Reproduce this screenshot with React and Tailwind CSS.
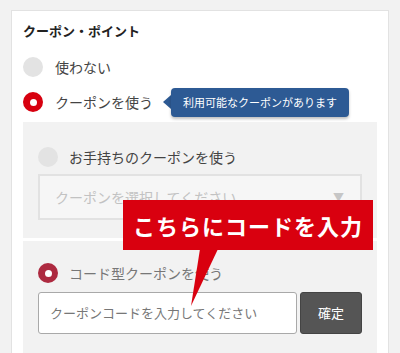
const jp = { fontFamily: '"Noto Sans CJK JP", "Noto Sans", sans-serif' };

// radio circle: off / on / on-muted
function Radio({ state }) {
  if (state === 'on') {
    return (
      <span className="w-[20px] h-[20px] rounded-full bg-[#d7000f] flex items-center justify-center shrink-0">
        <span className="w-[7px] h-[7px] rounded-full bg-white"></span>
      </span>
    );
  }
  if (state === 'muted') {
    return (
      <span className="w-[20px] h-[20px] rounded-full bg-[#ad2a40] flex items-center justify-center shrink-0">
        <span className="w-[7px] h-[7px] rounded-full bg-white"></span>
      </span>
    );
  }
  return <span className="w-[20px] h-[20px] rounded-full bg-[#e3e3e3] shrink-0"></span>;
}

export default function App() {
  return (
    <div className="w-[400px] h-[353px] bg-[#f2f2f2] pt-[10px] px-[11px] overflow-hidden relative" style={jp}>
      {/* Card */}
      <div className="bg-white border border-[#e2e2e2] border-b-0 h-full px-[11px] pt-[11px]">
        <h2 className="text-[13px] leading-[18px] font-bold text-[#222]">クーポン・ポイント</h2>

        <div className="flex items-center h-[20px] mt-[17px]">
          <Radio state="off" />
          <span className="ml-[12px] text-[14px] text-[#444]">使わない</span>
        </div>

        <div className="flex items-center h-[20px] mt-[15px]">
          <Radio state="on" />
          <span className="ml-[12px] text-[14px] text-[#444]">クーポンを使う</span>
          {/* Tooltip */}
          <div className="ml-[10px] flex items-center">
            <span className="w-0 h-0 border-y-[7px] border-y-transparent border-r-[8px] border-r-[#2d5a94]"></span>
            <span className="bg-[#2d5a94] text-white text-[11px] leading-[29px] h-[29px] px-[12px] rounded-[4px] shadow-[0_2px_3px_rgba(0,0,0,0.25)]">
              利用可能なクーポンがあります
            </span>
          </div>
        </div>

        {/* Coupon panel */}
        <div className="mt-[10px] bg-[#f2f2f2]">
          <div className="px-[15px] pt-[25px] pb-[18px]">
            <div className="flex items-center h-[20px]">
              <Radio state="off" />
              <span className="ml-[11px] text-[14px] text-[#444]">お手持ちのクーポンを使う</span>
            </div>
            <div className="mt-[7px] h-[46px] bg-[#f6f6f6] border-2 border-[#e2e2e2] flex items-center justify-between pl-[15px] pr-[16px]">
              <span className="text-[14px] text-[#c2c2c2]">クーポンを選択してください</span>
              <span className="text-[11px] text-[#c6c6c6]">▼</span>
            </div>
          </div>

          <div className="border-t-[3px] border-white px-[15px] pt-[22px] pb-[20px]">
            <div className="flex items-center h-[20px]">
              <Radio state="muted" />
              <span className="ml-[11px] text-[14px] text-[#777]">コード型クーポンを使う</span>
            </div>
            <div className="mt-[9px] flex gap-[3px] h-[42px]">
              <div className="flex-1 bg-white border border-[#a9a9a9] rounded-[3px] flex items-center pl-[11px]">
                <span className="text-[13px] text-[#777]">クーポンコードを入力してください</span>
              </div>
              <button className="w-[62px] bg-[#555] border border-[#444] rounded-[3px] text-white text-[13px]">
                確定
              </button>
            </div>
          </div>
        </div>
      </div>

      {/* Red callout over the form */}
      <div className="absolute left-[123px] top-[200px] w-[250px] h-[50px] bg-[#d9000f] flex items-center justify-center">
        <span className="text-white text-[22px] font-bold tracking-[1px]">こちらにコードを入力</span>
      </div>
      <svg className="absolute left-[185px] top-[249px]" width="40" height="60" viewBox="0 0 40 60">
        <polygon points="15,0 33,0 6,57" fill="#d9000f" />
      </svg>
    </div>
  );
}
